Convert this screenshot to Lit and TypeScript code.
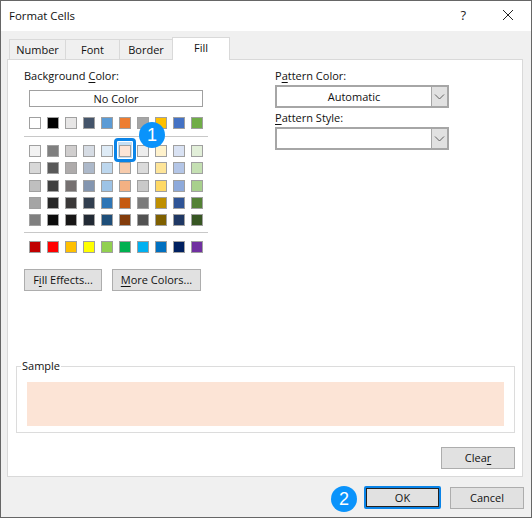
import { LitElement, html, css, svg } from "lit";
import { customElement } from "lit/decorators.js";

const THEME = ["#ffffff","#000000","#e7e6e6","#44546a","#5b9bd5","#ed7d31","#a5a5a5","#ffc000","#4472c4","#70ad47"];
const TINTS = [
  ["#f2f2f2","#7f7f7f","#d0cece","#d6dce4","#deebf6","#fce4d6","#ededed","#fff2cc","#d9e2f3","#e2efd9"],
  ["#d8d8d8","#595959","#aeabab","#adb9ca","#bdd7ee","#f7cbac","#dbdbdb","#fee599","#b4c6e7","#c5e0b3"],
  ["#bfbfbf","#3f3f3f","#757070","#8496b0","#9dc3e6","#f4b183","#c9c9c9","#ffd965","#8eaadb","#a8d08d"],
  ["#a5a5a5","#262626","#3a3838","#323f4f","#2e75b5","#c55a11","#7b7b7b","#bf8f00","#2f5496","#538135"],
  ["#7f7f7f","#0c0c0c","#171616","#222a35","#1e4e79","#833c0b","#525252","#7f6000","#1f3864","#375623"],
];
const STANDARD = ["#c00000","#ff0000","#ffc000","#ffff00","#92d050","#00b050","#00b0f0","#0070c0","#002060","#7030a0"];

const chevron = svg`<svg width="11" height="6" viewBox="0 0 11 6"><path d="M1 .5 5.5 5 10 .5" fill="none" stroke="#606060" stroke-width="1"/></svg>`;

@customElement("app-root")
export class AppRoot extends LitElement {
  static styles = css`
    :host { display: block; width: 532px; height: 518px; font-family: "Open Sans", "Noto Sans", sans-serif; font-size: 11px; color: #111; }
    * { box-sizing: border-box; }
    u { text-underline-offset: 2px; }
    .win { position: relative; width: 532px; height: 518px; background: #f0f0f0; border: 1px solid #666; display: flex; flex-direction: column; }
    .title { height: 30px; flex: none; background: #fff; display: flex; align-items: center; padding: 0 8px 2px; font-size: 11.4px; }
    .title .t { flex: 1; }
    .q { font-size: 13px; margin-right: 37px; color: #222; }
    .x { width: 10px; height: 10px; margin-right: 10px; display: block; }
    .tabs { height: 28px; flex: none; display: flex; align-items: flex-end; padding-left: 8px; position: relative; z-index: 1; }
    .tab { height: 20px; background: #f0f0f0; border: 1px solid #d9d9d9; border-bottom: 0; display: flex; align-items: center; justify-content: center; margin-right: -1px; }
    .tab.n { width: 57px; } .tab.f { width: 55px; } .tab.b { width: 54px; }
    .tab.on { width: 58px; height: 23px; background: #fff; margin-bottom: -1px; margin-right: 0; padding-bottom: 3px; }
    .panel { width: 516px; height: 418px; flex: none; margin-left: 6px; background: #fff; border: 1px solid #d9d9d9; display: flex; flex-direction: column; padding: 8px 7px 8px 8px; }
    .top { display: flex; height: 223px; flex: none; margin-left: 8px; }
    .left { width: 251px; flex: none; }
    .right { flex: 1; }
    .lab { height: 16px; line-height: 16px; }
    .nocolor { width: 174px; height: 17px; margin: 6px 0 0 5px; border: 1px solid #a0a0a0; display: flex; align-items: center; justify-content: center; }
    .row { display: flex; gap: 6px; margin-left: 5px; }
    .sw { width: 12px; height: 12px; border: 1px solid #a0a0a0; position: relative; flex: none; }
    .sw.sel::after { content: ""; position: absolute; left: -6px; right: -6px; top: -8px; bottom: -6px; z-index: -1; background: #c5dff5; border: 3px solid #0a84e8; border-radius: 4px; box-shadow: inset 0 0 0 1px #fff; }
    .r1 { margin-top: 10px; }
    .sep { width: 184px; height: 1px; background: #c8c8c8; }
    .sep.a { margin-top: 7px; }
    .sep.b { margin-top: 6px; }
    .tints { display: grid; row-gap: 5.25px; margin-top: 8px; isolation: isolate; }
    .r3 { margin-top: 8px; }
    .btns { display: flex; gap: 10px; margin-top: 16px; }
    .btn { height: 22px; background: #e1e1e1; border: 1px solid #adadad; display: flex; align-items: center; justify-content: center; flex: none; padding-bottom: 2px; }
    .fe { width: 78px; } .mc { width: 89px; }
    .combo { width: 174px; height: 23px; border: 2px solid #a6a6a6; background: #fff; display: flex; }
    .combo .v { flex: 1; display: flex; align-items: center; justify-content: center; }
    .combo .d { width: 16px; background: #e1e1e1; border-left: 1px solid #a6a6a6; display: flex; align-items: center; justify-content: center; }
    .c1 { margin-top: 1px; }
    .l2 { margin-top: 2px; height: 17px; }
    .sample { position: relative; margin: 75px 0 0 0; width: 499px; height: 67px; flex: none; border: 1px solid #dcdcdc; padding: 15px 10px 0 10px; }
    .leg { position: absolute; left: 4px; top: -9px; background: #fff; padding: 0 1px; line-height: 16px; }
    .fill { height: 44px; background: #fce4d6; }
    .clearrow { display: flex; justify-content: flex-end; margin-top: 14px; }
    .clear { width: 74px; }
    .foot { flex: 1; display: flex; justify-content: flex-end; align-items: flex-start; padding: 9px 7px 0 0; gap: 9px; }
    .ok { width: 77px; height: 23px; background: #e1e1e1; border: 2px solid #0a84e8; border-radius: 2px; box-shadow: inset 0 0 0 1px #222; display: flex; align-items: center; justify-content: center; padding-bottom: 1px; }
    .cancel { width: 74px; height: 22px; margin-top: 1px; }
    .badge { position: absolute; width: 26px; height: 26px; border-radius: 50%; background: #0a93fb; color: #fff; display: flex; align-items: center; justify-content: center; font-size: 18px; font-family: "Liberation Sans", sans-serif; z-index: 3; }
    .b1 { left: 138px; top: 121px; }
    .b2 { left: 330px; top: 485px; }
  `;

  private sw(c: string, sel = false) {
    return html`<div class="sw ${sel ? "sel" : ""}" style="background:${c}"></div>`;
  }

  render() {
    return html`<div class="win">
      <div class="title">
        <span class="t">Format Cells</span>
        <span class="q">?</span>
        <svg class="x" viewBox="0 0 10 10"><path d="M0 0l10 10M10 0 0 10" stroke="#222" stroke-width="1" fill="none"/></svg>
      </div>
      <div class="tabs">
        <div class="tab n">Number</div><div class="tab f">Font</div><div class="tab b">Border</div><div class="tab on">Fill</div>
      </div>
      <div class="panel">
        <div class="top">
          <div class="left">
            <div class="lab">Background <u>C</u>olor:</div>
            <div class="nocolor">No Color</div>
            <div class="row r1">${THEME.map((c) => this.sw(c))}</div>
            <div class="sep a"></div>
            <div class="tints">
              ${TINTS.map((r, i) => html`<div class="row">${r.map((c, j) => this.sw(c, i === 0 && j === 5))}</div>`)}
            </div>
            <div class="sep b"></div>
            <div class="row r3">${STANDARD.map((c) => this.sw(c))}</div>
            <div class="btns">
              <div class="btn fe">F<u>i</u>ll Effects...</div>
              <div class="btn mc"><u>M</u>ore Colors...</div>
            </div>
          </div>
          <div class="right">
            <div class="lab">P<u>a</u>ttern Color:</div>
            <div class="combo c1"><div class="v">Automatic</div><div class="d">${chevron}</div></div>
            <div class="lab l2"><u>P</u>attern Style:</div>
            <div class="combo"><div class="v"></div><div class="d">${chevron}</div></div>
          </div>
        </div>
        <div class="sample">
          <div class="leg">Sample</div>
          <div class="fill"></div>
        </div>
        <div class="clearrow"><div class="btn clear">Clea<u>r</u></div></div>
      </div>
      <div class="foot">
        <div class="ok">OK</div>
        <div class="btn cancel">Cancel</div>
      </div>
      <div class="badge b1">1</div>
      <div class="badge b2">2</div>
    </div>`;
  }
}
